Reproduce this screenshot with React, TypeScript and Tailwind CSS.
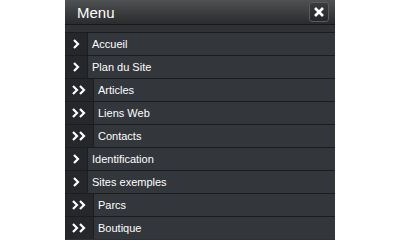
const items: { label: string; level: 1 | 2 }[] = [
  { label: 'Accueil', level: 1 },
  { label: 'Plan du Site', level: 1 },
  { label: 'Articles', level: 2 },
  { label: 'Liens Web', level: 2 },
  { label: 'Contacts', level: 2 },
  { label: 'Identification', level: 1 },
  { label: 'Sites exemples', level: 1 },
  { label: 'Parcs', level: 2 },
  { label: 'Boutique', level: 2 },
]

function Chevron({ x }: { x: number }) {
  return <path d={`M${x} 1 L${x + 4} 5 L${x} 9`} stroke="#fff" strokeWidth="2.2" fill="none" />
}

export default function App() {
  return (
    <div className="w-[400px] h-[240px] bg-white flex justify-center overflow-hidden" style={{ fontFamily: '"Liberation Sans", Arial, sans-serif' }}>
      <div className="w-[270px] flex flex-col bg-[#2e3033]">
        <div className="h-[25px] flex items-center justify-between pl-[12px] pr-[6px] bg-gradient-to-b from-[#505153] to-[#2a2b2d] border-b border-[#18191a]">
          <span className="text-white text-[15px] leading-none">Menu</span>
          <button className="w-[20px] h-[20px] rounded-[3px] border border-[#5a5b5d] bg-gradient-to-b from-[#3a3b3d] to-[#262729] flex items-center justify-center">
            <svg width="12" height="12" viewBox="0 0 12 12">
              <path d="M2 2 L10 10 M10 2 L2 10" stroke="#fff" strokeWidth="2.6" />
            </svg>
          </button>
        </div>
        <div className="h-[7px] bg-[#2f3134]" />
        {items.map((it) => (
          <div key={it.label} className="h-[23px] flex border-t border-[#1b1c1e] bg-[#33363b]">
            <div className={`${it.level === 1 ? 'w-[23px]' : 'w-[29px]'} bg-[#25272a] border-r border-[#1c1d1f] flex items-center justify-center`}>
              {it.level === 1 ? (
                <svg width="7" height="10" viewBox="0 0 7 10">
                  <Chevron x={1} />
                </svg>
              ) : (
                <svg width="14" height="10" viewBox="0 0 14 10">
                  <Chevron x={1} />
                  <Chevron x={8} />
                </svg>
              )}
            </div>
            <div className="flex items-center pl-[4px] text-white text-[11px]">{it.label}</div>
          </div>
        ))}
      </div>
    </div>
  )
}
